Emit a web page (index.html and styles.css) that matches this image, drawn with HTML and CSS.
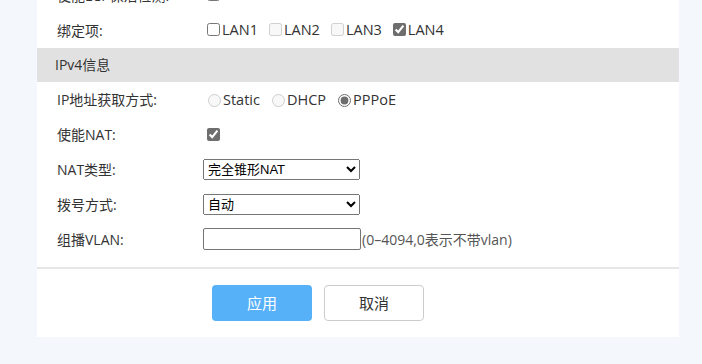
FILE: index.html
```
<html>
  <head>
    <title>WAN设置</title>
    <link rel="stylesheet" href="styles.css">
  </head>
  <body>
    <div id="panel">
      <div class="row">
        <label class="name">使能LCP保活检测:</label>
        <div class="field"><input type="checkbox"></div>
      </div>
      <div class="row">
        <label class="name">绑定项:</label>
        <div class="field">
          <label class="opt"><input type="checkbox">LAN1</label>
          <label class="opt"><input type="checkbox" disabled>LAN2</label>
          <label class="opt"><input type="checkbox" disabled>LAN3</label>
          <label class="opt"><input type="checkbox" class="on" checked>LAN4</label>
        </div>
      </div>

      <div class="head">IPv4信息</div>

      <div class="row">
        <label class="name">IP地址获取方式:</label>
        <div class="field">
          <label class="opt"><input type="radio" name="ipmode" disabled>Static</label>
          <label class="opt"><input type="radio" name="ipmode" disabled>DHCP</label>
          <label class="opt"><input type="radio" name="ipmode" class="on" checked>PPPoE</label>
        </div>
      </div>
      <div class="row">
        <label class="name">使能NAT:</label>
        <div class="field"><input type="checkbox" class="on" checked></div>
      </div>
      <div class="row">
        <label class="name">NAT类型:</label>
        <div class="field">
          <select>
            <option>完全锥形NAT</option>
            <option>对称NAT</option>
          </select>
        </div>
      </div>
      <div class="row">
        <label class="name">拨号方式:</label>
        <div class="field">
          <select>
            <option>自动</option>
            <option>手动</option>
          </select>
        </div>
      </div>
      <div class="row">
        <label class="name">组播VLAN:</label>
        <div class="field">
          <input type="text" class="vlan"><span class="hint">(0–4094,0表示不带vlan)</span>
        </div>
      </div>

      <div class="actions">
        <button class="btn apply">应用</button>
        <button class="btn cancel">取消</button>
      </div>
    </div>
  </body>
</html>
```

FILE: styles.css
```
body {margin: 0; background-color: #f4f7fc; font-family: "Open Sans", "Noto Sans CJK SC", sans-serif; font-size: 14px; color: #333;}

#panel {width: 642px; margin: -23px 0 0 37px; background-color: #fff; padding-bottom: 16px;}

.row {display: flex; align-items: center; height: 35px;}
.row .name {width: 146px; padding-left: 20px; flex: none;}
.row .field {display: flex; align-items: center;}

.opt {display: flex; align-items: center; margin-right: 7px; font-size: 14.5px;}
.opt input {margin-right: 2px;}
input.on {accent-color: #6e6e6e;}

.head {height: 34px; line-height: 34px; background-color: #e1e1e1; padding-left: 18px; margin-top: 0.5px;}

select {width: 157px; height: 21px; font-size: 13px; font-family: "Liberation Sans", "Noto Sans CJK SC", sans-serif; color: #000;}

.vlan {width: 158px; height: 22px; border: 1px solid #767676; border-radius: 2px; margin: 0; padding: 1px 2px; box-sizing: border-box;}
.hint {color: #555; margin-left: 1px;}

.actions {border-top: 2px solid #e6e6e6; margin-top: 10px; padding: 16px 0 0 175px; display: flex; gap: 12px;}
.btn {width: 100px; height: 36px; border-radius: 4px; font-size: 15px; font-family: "Noto Sans CJK SC", sans-serif;}
.apply {background-color: #57b1f9; color: #fff; border: none;}
.cancel {background-color: #fff; color: #333; border: 1px solid #ccc;}
```
